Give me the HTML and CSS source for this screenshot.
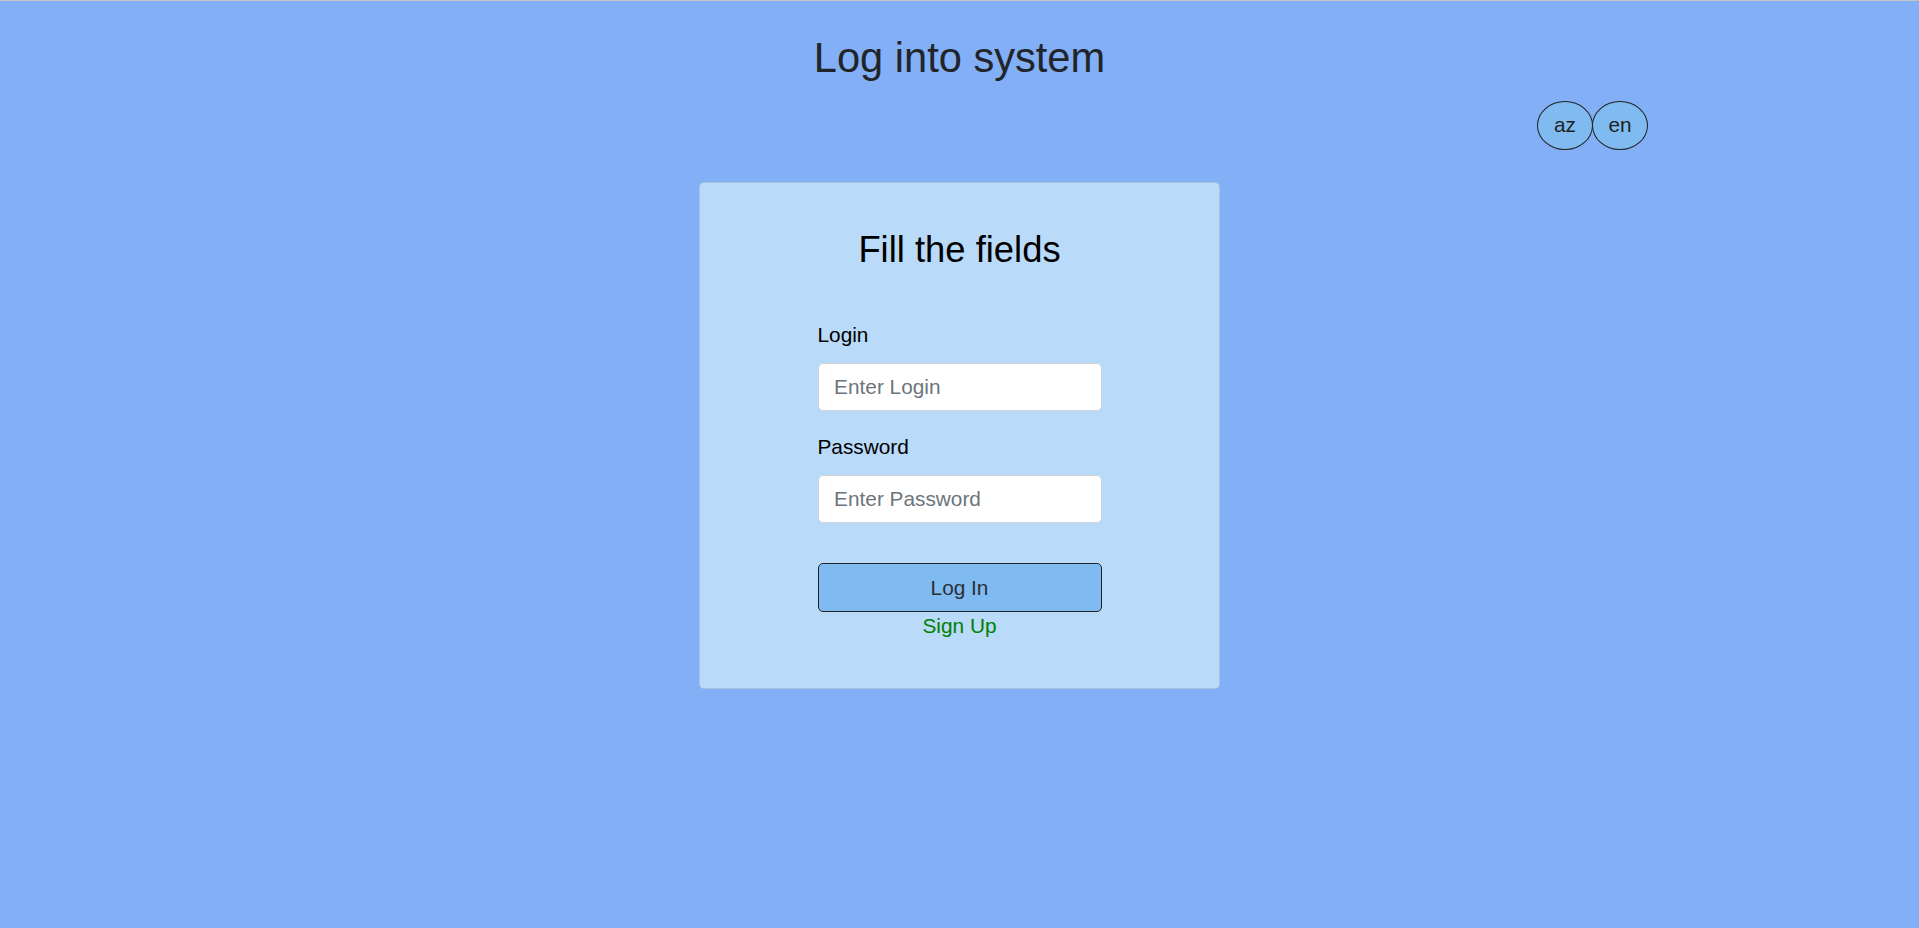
FILE: index.html
```html
<!DOCTYPE html>
<html lang="en">
<head>
<meta charset="utf-8">
<title>Log into system</title>
<link rel="stylesheet" href="styles.css">
</head>
<body>
<div class="page">
  <h1 class="title">Log into system</h1>
  <div class="lang-row">
    <button class="lang-btn" type="button">az</button>
    <button class="lang-btn" type="button">en</button>
  </div>
  <div class="card">
    <h3 class="card-title">Fill the fields</h3>
    <form class="form">
      <label class="label" for="login">Login</label>
      <input class="input" id="login" type="text" placeholder="Enter Login">
      <label class="label label-second" for="password">Password</label>
      <input class="input" id="password" type="password" placeholder="Enter Password">
      <button class="submit" type="button">Log In</button>
      <a class="signup" href="#">Sign Up</a>
    </form>
  </div>
</div>
</body>
</html>
```
FILE: styles.css
```css
* { box-sizing: border-box; }
html, body { height: 100%; }
body {
  margin: 0;
  background: #82aff5;
  border-top: 1px solid #c4c4c4;
  font-family: "Liberation Sans", Arial, sans-serif;
  font-size: 20.8px;
  line-height: 1.5;
  color: #212529;
}
.page {
  display: flex;
  flex-direction: column;
  align-items: center;
  padding-top: 32px;
}
.title {
  margin: 0;
  font-size: 41.6px;
  font-weight: 400;
  line-height: 1.2;
  color: #212529;
}
.lang-row {
  align-self: stretch;
  display: flex;
  justify-content: flex-end;
  padding-right: 271px;
  margin-top: 18px;
}
.lang-btn {
  width: 56px;
  height: 49px;
  margin: 0;
  padding: 0;
  border: 1px solid #222;
  border-radius: 50%;
  background: #7fbbf0;
  font-family: "Liberation Sans", Arial, sans-serif;
  font-size: 20.8px;
  color: #222;
}
.lang-btn + .lang-btn { margin-left: -1px; }
.card {
  margin-top: 32px;
  width: 521px;
  height: 507px;
  background: #b9daf8;
  border: 1px solid rgba(0, 0, 0, 0.1);
  border-radius: 5px;
  padding-top: 45px;
  display: flex;
  flex-direction: column;
  align-items: center;
}
.card-title {
  margin: 0;
  font-size: 36.4px;
  font-weight: 400;
  line-height: 1.2;
  color: #000;
}
.form {
  width: 284px;
  margin-top: 48px;
  display: flex;
  flex-direction: column;
}
.label {
  color: #000;
  margin-bottom: 13px;
  line-height: 30px;
}
.label-second { margin-top: 21.5px; }
.input {
  width: 100%;
  height: 48px;
  padding: 0 15.6px;
  border: 1px solid #ced4da;
  border-radius: 5px;
  background: #fff;
  font-family: "Liberation Sans", Arial, sans-serif;
  font-size: 20.8px;
  color: #212529;
  outline: none;
}
.input::placeholder { color: #6c757d; }
.submit {
  margin-top: 40px;
  height: 49px;
  width: 100%;
  border: 1px solid #222;
  border-radius: 5px;
  background: #7fbbf0;
  font-family: "Liberation Sans", Arial, sans-serif;
  font-size: 20.8px;
  color: #2a2f36;
  padding: 0;
}
.signup {
  align-self: center;
  color: #008000;
  text-decoration: none;
  line-height: 30px;
  margin-top: -1px;
}
```
